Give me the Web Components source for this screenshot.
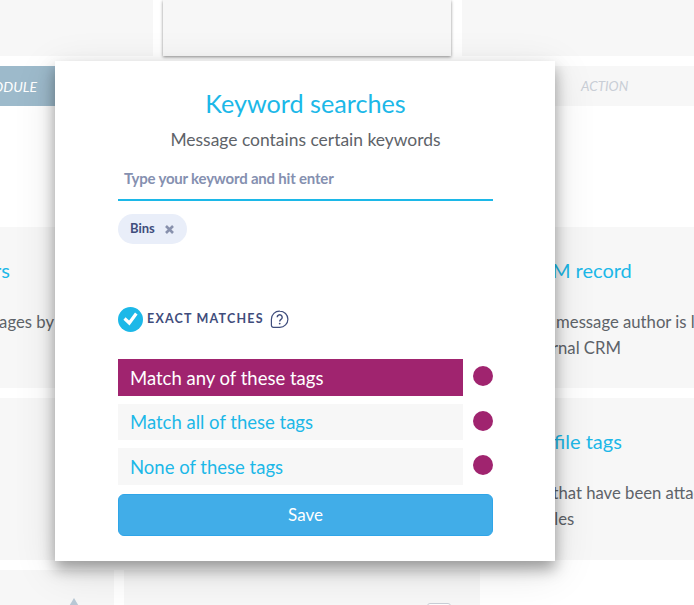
<!DOCTYPE html>
<html>
<head>
<meta charset="utf-8">
<title>Keyword searches</title>
<style>
  html, body { margin: 0; height: 100%; overflow: hidden; background: #fff; }
  body { font-family: Lato, "Open Sans", sans-serif; position: relative; }
</style>
</head>
<body>
<rule-board></rule-board>
<rule-modal>
  <keyword-chip slot="chips">Bins</keyword-chip>
  <match-row slot="rows" active tall>Match any of these tags</match-row>
  <match-row slot="rows">Match all of these tags</match-row>
  <match-row slot="rows" tall>None of these tags</match-row>
</rule-modal>

<script>
class RuleCard extends HTMLElement {
  connectedCallback() {
    this.attachShadow({ mode: 'open' });
    const title = this.getAttribute('title-text') || '';
    const lines = (this.getAttribute('lines') || '').split('|').filter(Boolean);
    this.shadowRoot.innerHTML = `
      <style>
        :host {
          display: block;
          background: #f7f7f7;
          overflow: hidden;
          box-sizing: border-box;
          padding-top: 30px;
          padding-left: var(--card-pad, 0);
        }
        .inner {
          width: var(--text-width, auto);
          display: flex;
          flex-direction: column;
          align-items: var(--text-align, flex-start);
          white-space: nowrap;
        }
        .title {
          color: #1cb8e8;
          font-size: 20px;
          line-height: 28px;
          margin-top: -1px;
          margin-bottom: 1px;
          margin-left: var(--title-left, 0);
          margin-right: var(--title-right, 0);
        }
        .line {
          color: #5e6369;
          font-size: 16.7px;
          line-height: 26px;
        }
        .title + .line { margin-top: 24px; }
      </style>
      <div class="inner">
        ${title ? `<div class="title">${title}</div>` : ''}
        ${lines.map(l => `<div class="line">${l}</div>`).join('')}
      </div>`;
  }
}
customElements.define('rule-card', RuleCard);

class RuleBoard extends HTMLElement {
  connectedCallback() {
    this.attachShadow({ mode: 'open' });
    this.shadowRoot.innerHTML = `
      <style>
        :host { display: block; width: 694px; height: 605px; overflow: hidden; }
        .top {
          display: grid;
          grid-template-columns: 153px 288px 1fr;
          column-gap: 10px;
          height: 56px;
        }
        .top div { background: #f7f7f7; }
        .top .raised { box-shadow: 0 1px 3px rgba(0,0,0,.45); }
        .top .right { margin-left: 1px; }
        .heads {
          display: grid;
          grid-template-columns: 55px 1fr 139px;
          height: 40px;
          margin-top: 10px;
          font-style: italic;
          font-size: 14px;
        }
        .module {
          background: #9dbacb;
          color: #fff;
          overflow: hidden;
          display: flex;
          align-items: center;
          justify-content: flex-end;
          padding-right: 18px;
        }
        .action {
          grid-column: 3;
          background: #f7f7f7;
          color: #c9ced6;
          font-size: 13.5px;
          display: flex;
          align-items: center;
          padding-left: 26px;
        }
        .cards {
          display: grid;
          grid-template-columns: 300px 1fr;
          grid-template-rows: 161px 162px;
          gap: 10px 20px;
          margin-top: 121px;
        }
        .left { --text-width: 54px; --text-align: flex-end; --title-right: 44px; }
        .crm { --card-pad: 204px; --title-left: 2px; }
        .tags { --card-pad: 196px; --title-left: 8px; }
        .bottom {
          display: grid;
          grid-template-columns: 114px 356px;
          column-gap: 10px;
          height: 60px;
          margin-top: 10px;
        }
        .bottom > div { background: #f7f7f7; }
        .tri {
          width: 0; height: 0;
          border-left: 6px solid transparent;
          border-right: 6px solid transparent;
          border-bottom: 10px solid #b9c9d6;
          margin: 28px 0 0 68px;
        }
        .box {
          width: 22px; height: 20px;
          border: 1px solid #c9ced6;
          border-radius: 3px;
          margin: 33px 0 0 303px;
          background: #fff;
        }
      </style>
      <div class="top">
        <div></div>
        <div class="raised"></div>
        <div class="right"></div>
      </div>
      <div class="heads">
        <div class="module">MODULE</div>
        <div class="action">ACTION</div>
      </div>
      <div class="cards">
        <rule-card class="left" title-text="Filters" lines="messages by"></rule-card>
        <rule-card class="crm" title-text="CRM record" lines="The message author is listed|internal CRM"></rule-card>
        <rule-card></rule-card>
        <rule-card class="tags" title-text="Profile tags" lines="Tags that have been attached|&nbsp;profiles"></rule-card>
      </div>
      <div class="bottom">
        <div><div class="tri"></div></div>
        <div><div class="box"></div></div>
      </div>`;
  }
}
customElements.define('rule-board', RuleBoard);

class KeywordChip extends HTMLElement {
  connectedCallback() {
    this.attachShadow({ mode: 'open' });
    this.shadowRoot.innerHTML = `
      <style>
        :host {
          display: inline-flex;
          align-items: center;
          height: 30px;
          padding: 0 12px;
          gap: 9px;
          border-radius: 15px;
          background: #e9eef9;
          color: #3f4d7c;
          font-size: 13px;
          font-weight: 700;
        }
        span { position: relative; top: -1px; }
        svg { display: block; }
      </style>
      <span><slot></slot></span>
      <svg width="11" height="11" viewBox="0 0 11 11">
        <path d="M2 2l7 7M9 2l-7 7" stroke="#8891ad" stroke-width="2.6" fill="none"/>
      </svg>`;
  }
}
customElements.define('keyword-chip', KeywordChip);

class MatchRow extends HTMLElement {
  connectedCallback() {
    this.attachShadow({ mode: 'open' });
    this.shadowRoot.innerHTML = `
      <style>
        :host { display: flex; align-items: center; justify-content: space-between; }
        .label {
          width: 345px;
          height: 36px;
          box-sizing: border-box;
          padding-left: 12px;
          display: flex;
          align-items: center;
          background: #f7f7f7;
          color: #1cb8e8;
          font-size: 18.5px;
        }
        :host([tall]) .label { height: 37px; }
        :host([active]) .label { background: #a0246f; color: #fff; }
        .dot { width: 20px; height: 20px; border-radius: 50%; background: #a0246f; margin-top: -2px; }
        :host([tall]) .dot { margin-top: -4px; }
      </style>
      <div class="label"><slot></slot></div>
      <div class="dot"></div>`;
  }
}
customElements.define('match-row', MatchRow);

class RuleModal extends HTMLElement {
  connectedCallback() {
    this.attachShadow({ mode: 'open' });
    this.shadowRoot.innerHTML = `
      <style>
        :host {
          display: block;
          position: absolute;
          left: 55px;
          top: 61px;
          width: 500px;
          height: 500px;
          box-sizing: border-box;
          padding: 0 62px 0 63px;
          background: #fff;
          box-shadow: 0 8px 14px rgba(0,0,0,.35), 0 10px 40px rgba(0,0,0,.12);
        }
        h2 {
          margin: 26px 0 0;
          font-size: 25.2px;
          line-height: 32px;
          font-weight: 400;
          text-align: center;
          color: #1cb8e8;
        }
        .sub {
          margin-top: 10px;
          font-size: 17.45px;
          line-height: 22px;
          text-align: center;
          color: #5e6369;
        }
        .input {
          margin-top: 12px;
          height: 38px;
          box-sizing: border-box;
          padding: 0 6px 6px;
          display: flex;
          align-items: center;
          border-bottom: 2px solid #1cb8e8;
          color: #8590b0;
          font-size: 15px;
          font-weight: 700;
          letter-spacing: -.2px;
        }
        .chips { margin-top: 13px; height: 92px; }
        .exact { display: flex; align-items: center; height: 26px; }
        .exact span {
          margin: 0 6px 0 4px;
          font-size: 12.5px;
          font-weight: 700;
          letter-spacing: 1.2px;
          color: #3f4d7c;
          position: relative;
          top: -1px;
        }
        svg { display: block; }
        .rows { display: flex; flex-direction: column; gap: 8px; margin-top: 27px; }
        button {
          display: block;
          width: 100%;
          height: 42px;
          margin-top: 9px;
          border: 1px solid #2fa5e8;
          border-radius: 6px;
          background: #41ade8;
          color: #fff;
          font: 400 17px Lato, sans-serif;
          padding: 0 0 2px;
        }
      </style>
      <h2>Keyword searches</h2>
      <div class="sub">Message contains certain keywords</div>
      <div class="input">Type your keyword and hit enter</div>
      <div class="chips"><slot name="chips"></slot></div>
      <div class="exact">
        <svg width="25" height="25" viewBox="0 0 25 25">
          <circle cx="12.5" cy="12.5" r="12.5" fill="#1cb8e8"/>
          <path d="M6.5 11.5l4.8 4.5 7-9.5" stroke="#fff" stroke-width="3.2" fill="none"/>
        </svg>
        <span>EXACT MATCHES</span>
        <svg width="19" height="19" viewBox="0 0 19 19">
          <path d="M9.8 1.1a8.1 8.1 0 0 1 0 16.2H3.4a2 2 0 0 1-2-2V9.2a8.1 8.1 0 0 1 8.4-8.1z" fill="none" stroke="#3f4d7c" stroke-width="1.2"/>
          <path d="M7.2 7.2a2.5 2.5 0 1 1 3.8 2.2c-.9.6-1.3 1-1.3 2" fill="none" stroke="#3f4d7c" stroke-width="1.4"/>
          <circle cx="9.7" cy="13.6" r=".9" fill="#3f4d7c"/>
        </svg>
      </div>
      <div class="rows"><slot name="rows"></slot></div>
      <button>Save</button>`;
  }
}
customElements.define('rule-modal', RuleModal);
</script>
</body>
</html>
